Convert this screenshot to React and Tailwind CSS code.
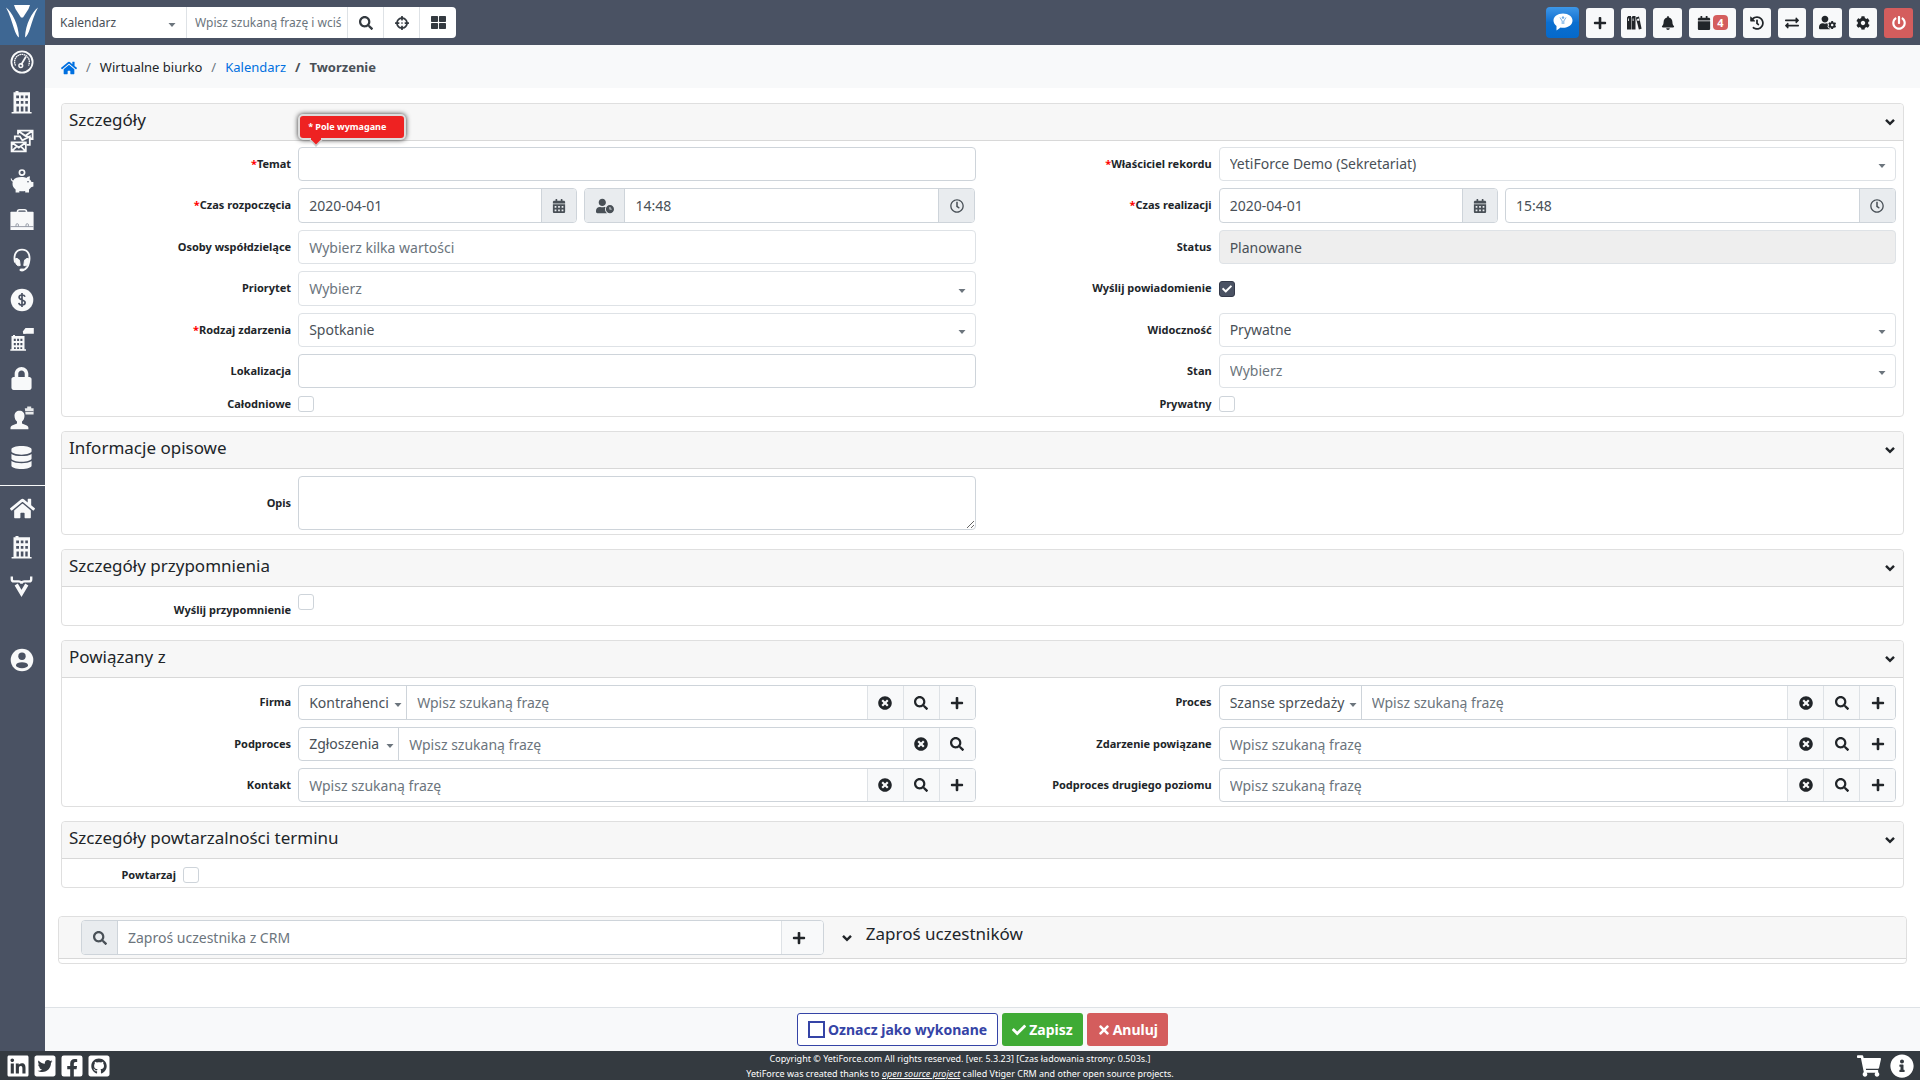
import {
  FaBell,
  FaCalendar,
  FaCalendarAlt,
  FaCheck,
  FaCog,
  FaCrosshairs,
  FaDatabase,
  FaExchangeAlt,
  FaFacebookSquare,
  FaGithubSquare,
  FaHistory,
  FaHome,
  FaInfoCircle,
  FaLinkedin,
  FaLock,
  FaPlus,
  FaPowerOff,
  FaRegClock,
  FaSearch,
  FaShoppingCart,
  FaThLarge,
  FaTimes,
  FaTimesCircle,
  FaTwitterSquare,
  FaUserClock,
  FaUserCog,
} from 'react-icons/fa';

/* ---------- custom icons ---------- */

function GaugeIcon() {
  return (
    <svg viewBox="0 0 24 24" className="size-6" fill="none" stroke="currentColor">
      <circle cx="12" cy="12" r="10.6" strokeWidth="1.8" />
      <path d="M5.6 15.5a7.4 7.4 0 1 1 12.8 0" strokeWidth="1.3" strokeDasharray="1.6 0.5" />
      <path d="M16 6.5 11 15" strokeWidth="1.7" />
      <circle cx="10.8" cy="15.6" r="1.9" strokeWidth="1.4" />
    </svg>
  );
}

function BuildingIcon() {
  return (
    <svg viewBox="0 0 24 24" className="size-6" fill="currentColor">
      <path
        fillRule="evenodd"
        d="M3.500 2.200h2V1h3v1.200h11.500V22h1.600v1.500H1.600V22h1.900ZM6.200 5.400v2.800h2.800V5.400Zm4.600 0v2.800h2.600V5.400Zm4.500 0v2.800h2.600V5.400ZM6.200 11v2.800h2.800V11Zm4.600 0v2.800h2.600V11Zm4.500 0v2.800h2.600V11ZM6.500 16.600V21.500h2.400v-4.900Zm4.300 0v4.900h2.600v-4.900Zm4.500 0v4.900h2.400v-4.900Z"
      />
    </svg>
  );
}

function MailsIcon() {
  return (
    <svg viewBox="0 0 24 24" className="size-6" fill="none" stroke="currentColor" strokeWidth="1.8">
      <path d="M8 5.4V1.6h14.6v8.6h-3M8 1.8l7.3 5 7.2-5M15.8 6.4l6.6 3.8" />
      <path d="M4.8 10.8V7.4h5l2.6 4 7.4-4v8.4h-3.2" />
      <path d="M1.6 13.4h14.2v9H1.6ZM1.8 13.6l7 5 7-5M1.8 22.2l5.2-5M15.6 22.2l-5-5" />
    </svg>
  );
}

function PiggyIcon() {
  return (
    <svg viewBox="0 0 24 24" className="size-6" fill="currentColor">
      <circle cx="12" cy="3.6" r="2.6" fill="none" stroke="currentColor" strokeWidth="1.7" />
      <path d="M1.4 9.2c.6 1.5 1 2.200 1.800 2.200C4.600 9 7.800 8 11.600 8c2 0 3.400.2 4.800.9.900-.900 2-1.500 3.600-1.600l-.4 3c1 .8 1.500 1.700 1.900 2.600h1.900v4.700l-2.300.7c-.6 1-1.300 1.700-2.100 2.300v2.800h-3.800v-1.500c-2 .3-4 .3-5.800 0v1.500H5.600v-3C3.700 18.900 2.500 17.200 2.500 14.800c0-.9.100-1.500.3-2.100C1.500 12.300.8 10.900.7 9.500Z" />
      <circle cx="18" cy="12.800" r=".8" fill="#4a5263" />
    </svg>
  );
}

function CaseIcon() {
  return (
    <svg viewBox="0 0 24 24" className="size-6" fill="currentColor">
      <path d="M7.500 4.500V3.600C7.500 2.400 8.500 1.800 9.500 1.800h5c1 0 2 .6 2 1.800v.9" fill="none" stroke="currentColor" strokeWidth="1.6" />
      <path d="M1.200 3.800h21.600q.8 0 .8.800v17.400H.4V4.600q0-.8.800-.8Z" />
      <path d="M.4 18.600h23.200M6 18.500v-2.200q1.200-1.200 2.400 0v2.200M16 18.500v-2.200q1.200-1.200 2.400 0v2.200" fill="none" stroke="#8d93a0" strokeWidth=".9" />
    </svg>
  );
}

function HeadsetIcon() {
  return (
    <svg viewBox="0 0 24 24" className="size-6" fill="none" stroke="currentColor" strokeWidth="1.800">
      <path d="M5 14.500C3.200 7 6 1.600 12 1.600S20.800 7 19 14.500c-.8 4-2 6.500-6 7.500" />
      <path d="M5.600 10.500c2.200-.3 3.500.8 4 2.500l.6 4.500c-2.200.8-4-.2-4.600-3Z" fill="currentColor" strokeWidth="1" />
      <path d="M18.400 10.500c-2.200-.3-3.500.8-4 2.500l-.6 4.500c2.200.8 4-.2 4.600-3Z" fill="currentColor" strokeWidth="1" />
      <ellipse cx="12" cy="22" rx="2.600" ry="1.400" fill="currentColor" stroke="none" />
    </svg>
  );
}

function DollarIcon() {
  return (
    <svg viewBox="0 0 24 24" className="size-6" fill="none">
      <circle cx="12" cy="12" r="11.300" fill="currentColor" />
      <path
        d="M15 8.800C14.600 7.500 13.500 7 12 7c-1.700 0-2.900.8-2.900 2.300 0 3.400 6 1.900 6 5.300 0 1.500-1.300 2.400-3.100 2.400-1.700 0-2.900-.7-3.200-2.200M12 5v14"
        stroke="#4a5263"
        strokeWidth="1.700"
      />
    </svg>
  );
}

function OfficeTagIcon() {
  return (
    <svg viewBox="0 0 24 24" className="size-6" fill="currentColor">
      <path
        fillRule="evenodd"
        d="M1.500 9H3V8h2v1h9.500v13.200H16v1.500H.3v-1.500h1.200Zm2.300 2.700V14h2v-2.300Zm3.300 0V14h2v-2.300Zm3.300 0V14h2v-2.300ZM3.800 16v2.200h2V16Zm3.300 0v2.200h2V16Zm3.300 0v2.200h2V16ZM4 20.200v1.800h1.800v-1.800Zm3.100 0v1.800h2v-1.800Zm3.300 0v1.800h1.800v-1.800Z"
      />
      <path d="m12.800 4.500 2.700-3.500h8.300v5.800h-7l-3.500.3Z" />
    </svg>
  );
}

function AgentIcon() {
  return (
    <svg viewBox="0 0 24 24" className="size-6" fill="currentColor">
      <path d="M9.500 4.800c3 0 5 2 5 5 0 2.600-1 4.600-2.500 5.800v1.800l4.800 2c1 .5 1.600 1.400 1.600 2.400v1.400H.5v-1.400c0-1 .6-1.900 1.600-2.400l4.900-2v-1.800c-1.500-1.200-2.500-3.200-2.500-5.800 0-3 2-5 5-5Z" />
      <path d="M14.800 2.200h2.400V.6h4v1.600h2.400v6.400h-8Z" opacity=".9" />
      <path d="M15 5.500h8.600" stroke="#4a5263" strokeWidth=".7" />
    </svg>
  );
}

function YetiIcon() {
  return (
    <svg viewBox="0 0 24 24" className="size-6" fill="none" stroke="currentColor">
      <path d="M1.800 2.500v2.700q0 2.200 2 2.200h4.600q2.600 0 3.100 2 .5-2 3.100-2h4.600q2 0 2-2.200V2.500" strokeWidth="2.400" />
      <path d="m6.200 10.500 5.300 9 5.300-9" strokeWidth="3.600" />
    </svg>
  );
}

function ProfileIcon() {
  return (
    <svg viewBox="0 0 24 24" className="size-6">
      <circle cx="12" cy="12" r="11.300" fill="currentColor" />
      <circle cx="12" cy="8.200" r="3.700" fill="#4a5263" />
      <ellipse cx="12" cy="17.200" rx="6" ry="3" fill="#4a5263" />
    </svg>
  );
}

function BooksIcon() {
  return (
    <svg viewBox="0 0 16 16" className="size-4" fill="currentColor">
      <path
        fillRule="evenodd"
        d="M1 2.500 2.200 1H5v13.500H1Zm1.200 1V6h.8V3.500ZM5.500 2.500 6.700 1h2.800v13.500h-4Zm1.200 1V6h.8V3.500Z"
      />
      <path d="m9.800 2.500 3.200-1 2.600 12.300-2.700.8Z" />
      <path d="m11 4 2-.5.500 2-2 .6Z" fill="#f8f9fa" />
    </svg>
  );
}

function LogoIcon() {
  return (
    <svg viewBox="0 0 45 45" className="size-[45px]" fill="#fff">
      <path d="M14 5h16l-1.500 4-5.500 8.500h-2L15.500 9Z" />
      <path d="M6 7.500C12 12 18.500 24 19 37.500c-2-1-3.500-4.500-5-9C12 22 9.500 14 6 7.500Z" />
      <path d="M38 7.500C32 12 25.500 24 25 37.500c2-1 3.500-4.500 5-9 2-6.500 4.500-14.500 8-21Z" />
    </svg>
  );
}

function ChatIcon() {
  return (
    <svg viewBox="0 0 20 18" className="w-5 h-[18px]">
      <path d="M10 .5c5.400 0 9.500 3 9.500 7 0 4.200-4.100 7.300-9.500 7.300-.9 0-1.600 0-2.400-.2L3.500 17.500V13C1.500 11.600.5 9.600.5 7.500c0-4 4.100-7 9.500-7Z" fill="#fff" />
      <path d="m7 4.500 2.200 3.500v3M13 4.500l-2.200 3.500v3M9 4h2l-1 1.800Z" fill="none" stroke="#1877d2" strokeWidth=".6" />
    </svg>
  );
}

function ChevronIcon() {
  return (
    <svg viewBox="0 0 10 8" className="w-[10px] h-2" fill="none" stroke="#212529" strokeWidth="2.400">
      <path d="m1 1.800 4 4 4-4" />
    </svg>
  );
}

/* ---------- form parts ---------- */

const control = 'w-full h-full min-w-0 px-2.5 text-sm text-[#495057] placeholder:text-[#6c757d] outline-none';
const boxed = 'bg-white border border-[#ced4da] rounded-sm';

function Caret({ className = 'right-2.5' }) {
  return (
    <svg viewBox="0 0 8 4" className={`absolute top-1/2 w-2 h-1 pointer-events-none ${className}`} fill="#6c757d">
      <path d="M.5 0h7L4 4Z" />
    </svg>
  );
}

function Field({ id, label, required, children, className = 'h-[34px] items-center' }) {
  return (
    <div className={`flex ${className}`}>
      <label htmlFor={id} className="w-1/4 shrink-0 self-center pr-px text-right text-[11px] font-bold text-[#212529]">
        {required && <span className="text-[#ff0000]">*</span>}
        {label}
      </label>
      <div className="flex-1 min-w-0 h-full pl-1.5 pr-[7px] flex items-[inherit]">{children}</div>
    </div>
  );
}

function TextField({ id, ...props }) {
  return <input id={id} type="text" className={`${control} ${boxed}`} {...props} />;
}

function SelectField({ id, value, muted }) {
  return (
    <div className="relative w-full h-full">
      <select
        id={id}
        className={`w-full h-full px-2.5 appearance-none text-sm bg-white border border-[#dee2e6] rounded-sm outline-none ${muted ? 'text-[#6c757d]' : 'text-[#495057]'}`}
      >
        <option>{value}</option>
      </select>
      <Caret />
    </div>
  );
}

function Checkbox({ id, checked }) {
  return (
    <span className="relative size-4 shrink-0 self-center flex">
      <input
        id={id}
        type="checkbox"
        defaultChecked={checked}
        className="peer size-4 appearance-none bg-white border border-[#ced4da] rounded-[3px] checked:bg-[#4a5263] checked:border-[#343a4a]"
      />
      <FaCheck className="absolute left-[3px] top-[3px] size-[10px] text-white pointer-events-none hidden peer-checked:block" />
    </span>
  );
}

function Addon({ label, children, className = 'w-[38px]' }) {
  return (
    <button
      type="button"
      aria-label={label}
      className={`h-full shrink-0 flex items-center justify-center bg-[#e9ecef] text-[#495057] text-sm border-[#ced4da] ${className}`}
    >
      {children}
    </button>
  );
}

function DateTimeField({ id, date, time, withUser }) {
  return (
    <div className="w-full h-full grid grid-cols-[5fr_7fr] gap-[7px]">
      <div className={`flex overflow-hidden ${boxed}`}>
        <input id={id} type="text" defaultValue={date} className={control} />
        <Addon label="Wybierz datę" className="w-[35px] border-l"><FaCalendarAlt /></Addon>
      </div>
      <div className={`flex overflow-hidden ${boxed}`}>
        {withUser && (
          <Addon label="Dostępność" className="w-10 border-r"><FaUserClock className="size-[18px]" /></Addon>
        )}
        <input type="text" aria-label="Godzina" defaultValue={time} className={control} />
        <Addon label="Wybierz godzinę" className="w-9 border-l"><FaRegClock /></Addon>
      </div>
    </div>
  );
}

function ReferenceField({ id, module, moduleWidth, noAdd }) {
  const btn = 'w-9 h-full shrink-0 flex items-center justify-center bg-[#f8f9fa] text-[#212529] text-sm border-l border-[#dee2e6]';
  return (
    <div className={`w-full h-full flex overflow-hidden ${boxed}`}>
      {module && (
        <div className={`relative shrink-0 border-r border-[#ced4da] ${moduleWidth}`}>
          <select aria-label="Moduł" className="w-full h-full px-2.5 appearance-none text-sm text-[#495057] outline-none">
            <option>{module}</option>
          </select>
          <Caret className="right-1" />
        </div>
      )}
      <input id={id} type="text" placeholder="Wpisz szukaną frazę" className={control} />
      <button type="button" aria-label="Wyczyść" className={btn}><FaTimesCircle /></button>
      <button type="button" aria-label="Szukaj" className={btn}><FaSearch /></button>
      {!noAdd && <button type="button" aria-label="Dodaj" className={btn}><FaPlus /></button>}
    </div>
  );
}

function Panel({ title, children, className = '' }) {
  return (
    <section className="mb-[14px] bg-white border border-[#dfdfdf] rounded">
      <header className="h-[37px] pl-[7px] pr-2 flex items-center justify-between bg-[#f7f7f7] border-b border-[#d8d8d8] rounded-t">
        <h2 className="text-[17px] leading-6 pb-1 text-[#212529]">{title}</h2>
        <button type="button" aria-label={`Zwiń: ${title}`}><ChevronIcon /></button>
      </header>
      <div className={className}>{children}</div>
    </section>
  );
}

/* ---------- layout ---------- */

const menuTop = [
  ['Pulpit', <GaugeIcon />],
  ['Firmy', <BuildingIcon />],
  ['Poczta', <MailsIcon />],
  ['Finanse', <PiggyIcon />],
  ['Sprzedaż', <CaseIcon />],
  ['Wsparcie', <HeadsetIcon />],
  ['Księgowość', <DollarIcon />],
  ['Oddziały', <OfficeTagIcon />],
  ['Bezpieczeństwo', <FaLock className="size-[23px]" />],
  ['Kadry', <AgentIcon />],
  ['Bazy danych', <FaDatabase className="size-[23px]" />],
];

const menuBottom = [
  ['Strona główna', <FaHome className="size-[25px]" />],
  ['Organizacja', <BuildingIcon />],
  ['YetiForce', <YetiIcon />],
];

const actions = [
  ['Dodaj', <FaPlus />, 'w-7'],
  ['Archiwum', <BooksIcon />, 'w-[25px]'],
  ['Powiadomienia', <FaBell />, 'w-[29px]'],
  ['Przypomnienia', <><FaCalendar /><span className="ml-0.5 w-[15px] h-[15px] rounded-sm bg-[#d45d5d] text-white text-[11px] leading-[15px] font-bold">4</span></>, 'w-[47px]'],
  ['Historia', <FaHistory />, 'w-7'],
  ['Przełącz', <FaExchangeAlt />, 'w-7'],
  ['Użytkownik', <FaUserCog className="size-[17px]" />, 'w-[29px]'],
  ['Ustawienia', <FaCog />, 'w-7'],
];

function TopBar() {
  const btn = 'h-full flex items-center justify-center text-sm text-[#343a40] border-l border-[#dee2e6]';
  return (
    <header className="h-[45px] flex items-center justify-between bg-[#4a5263] pr-[7px]">
      <div className="flex items-center">
        <a href="#" aria-label="YetiForce" className="mr-[7px] bg-[#3e6793]"><LogoIcon /></a>
        <div className="h-[31px] flex bg-white rounded-sm overflow-hidden">
          <div className="relative w-[135px] border-r border-[#dee2e6]">
            <select aria-label="Moduł wyszukiwania" className="w-full h-full pl-2 appearance-none text-xs text-[#495057] outline-none">
              <option>Kalendarz</option>
            </select>
            <Caret />
          </div>
          <input
            type="text"
            aria-label="Szukaj"
            placeholder="Wpisz szukaną frazę i wciś"
            className="w-[160px] pl-2 text-xs placeholder:text-[#6c757d] outline-none"
          />
          <button type="button" aria-label="Szukaj" className={`w-9 ${btn}`}><FaSearch /></button>
          <button type="button" aria-label="Szukaj globalnie" className={`w-9 ${btn}`}><FaCrosshairs /></button>
          <button type="button" aria-label="Wyszukiwanie zaawansowane" className={`w-[37px] ${btn}`}><FaThLarge className="size-[15px]" /></button>
        </div>
      </div>
      <div className="flex items-center gap-[7px]">
        <button type="button" aria-label="Czat" className="w-[33px] h-[31px] pb-0.5 flex items-center justify-center rounded-sm bg-linear-to-b from-[#3d97e8] from-0% via-[#0b6fd0] via-50% to-[#0569cb]">
          <ChatIcon />
        </button>
        {actions.map(([label, icon, width]) => (
          <button key={label} type="button" aria-label={label} className={`h-[30px] flex items-center justify-center rounded-[3px] bg-[#f8f9fa] text-sm text-[#212529] ${width}`}>
            {icon}
          </button>
        ))}
        <button type="button" aria-label="Wyloguj" className="w-[29px] h-[30px] flex items-center justify-center rounded-[3px] bg-[#d45d5d] text-white text-sm">
          <FaPowerOff />
        </button>
      </div>
    </header>
  );
}

function MenuLink({ label, icon }) {
  return (
    <a href="#" aria-label={label} className="h-[34px] pl-[10px] flex items-center text-[#f8f9fa]">
      {icon}
    </a>
  );
}

function Sidebar() {
  return (
    <nav className="w-[45px] shrink-0 bg-[#4a5263]">
      <div className="h-[430px] flex flex-col justify-between">
        {menuTop.map(([label, icon]) => <MenuLink key={label} label={label} icon={icon} />)}
      </div>
      <div className="mt-[10px] pt-[5px] border-t border-[#f8f9fa] flex flex-col gap-[5px]">
        {menuBottom.map(([label, icon]) => <MenuLink key={label} label={label} icon={icon} />)}
      </div>
      <div className="mt-10">
        <MenuLink label="Konto" icon={<ProfileIcon />} />
      </div>
    </nav>
  );
}

function Breadcrumbs() {
  return (
    <nav className="h-[43px] pl-4 pt-[3px] flex items-center gap-[9px] bg-[#f8f9fa] text-[13px] text-[#212529]">
      <a href="#" aria-label="Strona główna" className="text-[#0070e0]"><FaHome className="size-4" /></a>
      <span className="text-[#6c757d]">/</span>
      <span>Wirtualne biurko</span>
      <span className="text-[#6c757d]">/</span>
      <a href="#" className="text-[#0070e0]">Kalendarz</a>
      <span className="font-bold text-[#495057]">/</span>
      <span className="font-bold text-[#495057]">Tworzenie</span>
    </nav>
  );
}

function RequiredHint() {
  return (
    <div className="absolute left-0 bottom-[41px] w-[108px] h-[26px] px-2 bg-[#ee2222] border-2 border-[#dddddd] rounded-[5px] shadow-[0_0_5px_#333] text-[9px] leading-[22px] font-bold text-white">
      * Pole wymagane
      <svg viewBox="0 0 14 9" className="absolute left-[9px] top-[22px] w-[14px] h-[9px]">
        <path d="M0 1.500h14L7 9Z" fill="#ccc" />
        <path d="M2 0h10v1.500L7 6.500 2 1.500Z" fill="#ee2222" />
      </svg>
    </div>
  );
}

function EventForm() {
  return (
    <form className="px-4 pt-[15px]">
      <Panel title="Szczegóły" className="grid grid-cols-2 gap-y-[7px] pt-[6px] pb-[3px]">
        <Field id="subject" label="Temat" required>
          <div className="relative w-full h-full">
            <TextField id="subject" />
            <RequiredHint />
          </div>
        </Field>
        <Field id="owner" label="Właściciel rekordu" required>
          <SelectField id="owner" value="YetiForce Demo (Sekretariat)" />
        </Field>
        <Field id="start" label="Czas rozpoczęcia" required className="h-[35px]">
          <DateTimeField id="start" date="2020-04-01" time="14:48" withUser />
        </Field>
        <Field id="end" label="Czas realizacji" required className="h-[35px]">
          <DateTimeField id="end" date="2020-04-01" time="15:48" />
        </Field>
        <Field id="shared" label="Osoby współdzielące">
          <input id="shared" type="text" placeholder="Wybierz kilka wartości" className={`${control} bg-white border border-[#dee2e6] rounded-sm`} />
        </Field>
        <Field id="status" label="Status">
          <input id="status" type="text" readOnly defaultValue="Planowane" className={`${control} bg-[#eeeeee] border border-[#dee2e6] rounded-sm`} />
        </Field>
        <Field id="priority" label="Priorytet" className="h-[35px]"><SelectField id="priority" value="Wybierz" muted /></Field>
        <Field id="notify" label="Wyślij powiadomienie" className="h-[35px]"><Checkbox id="notify" checked /></Field>
        <Field id="type" label="Rodzaj zdarzenia" required><SelectField id="type" value="Spotkanie" /></Field>
        <Field id="visibility" label="Widoczność"><SelectField id="visibility" value="Prywatne" /></Field>
        <Field id="location" label="Lokalizacja"><TextField id="location" /></Field>
        <Field id="state" label="Stan"><SelectField id="state" value="Wybierz" muted /></Field>
        <Field id="allday" label="Całodniowe" className="h-[18px]"><Checkbox id="allday" /></Field>
        <Field id="private" label="Prywatny" className="h-[18px]"><Checkbox id="private" /></Field>
      </Panel>

      <Panel title="Informacje opisowe" className="grid grid-cols-2 pt-[7px] pb-1">
        <Field id="description" label="Opis" className="h-[54px]">
          <textarea id="description" className={`w-full h-full px-2.5 py-1 text-sm text-[#495057] outline-none ${boxed}`} />
        </Field>
      </Panel>

      <Panel title="Szczegóły przypomnienia" className="pt-[7px] pb-[7px]">
        <div className="w-1/2 h-6 flex items-start">
          <label htmlFor="reminder" className="w-1/4 shrink-0 self-end pr-px text-right text-[11px] font-bold text-[#212529]">
            Wyślij przypomnienie
          </label>
          <div className="pl-1.5"><Checkbox id="reminder" /></div>
        </div>
      </Panel>

      <Panel title="Powiązany z" className="grid grid-cols-2 gap-y-[7px] pt-[7px] pb-1">
        <Field id="company" label="Firma" className="h-[35px]"><ReferenceField id="company" module="Kontrahenci" moduleWidth="w-[108px]" /></Field>
        <Field id="process" label="Proces" className="h-[35px]"><ReferenceField id="process" module="Szanse sprzedaży" moduleWidth="w-[142px]" /></Field>
        <Field id="subprocess" label="Podproces"><ReferenceField id="subprocess" module="Zgłoszenia" moduleWidth="w-[100px]" noAdd /></Field>
        <Field id="related" label="Zdarzenie powiązane"><ReferenceField id="related" /></Field>
        <Field id="contact" label="Kontakt"><ReferenceField id="contact" /></Field>
        <Field id="subprocess2" label="Podproces drugiego poziomu"><ReferenceField id="subprocess2" /></Field>
      </Panel>

      <Panel title="Szczegóły powtarzalności terminu" className="h-7 pt-1 flex items-center gap-[7px]">
        <label htmlFor="repeat" className="w-[114px] text-right text-[11px] font-bold text-[#212529]">Powtarzaj</label>
        <Checkbox id="repeat" />
      </Panel>

      <section className="-mx-[3px] mt-7 pb-1 bg-white border border-[#dfdfdf] rounded">
        <header className="h-[42px] pl-[22px] flex items-center bg-[#f7f7f7] border-b border-[#d8d8d8] rounded-t">
          <div className={`w-[40.7%] h-[35px] flex overflow-hidden ${boxed}`}>
            <label htmlFor="invite" className="w-9 shrink-0 flex items-center justify-center bg-[#e9ecef] text-[#495057] text-sm border-r border-[#ced4da]">
              <FaSearch />
            </label>
            <input id="invite" type="text" placeholder="Zaproś uczestnika z CRM" className={control} />
            <button type="button" aria-label="Dodaj" className="w-[42px] pr-[6px] shrink-0 flex items-center justify-center bg-[#f8f9fa] text-[#212529] text-sm border-l border-[#dee2e6]">
              <FaPlus />
            </button>
          </div>
          <button type="button" aria-label="Zwiń: Zaproś uczestników" className="ml-[18px]"><ChevronIcon /></button>
          <h2 className="ml-[14px] pb-[7px] text-[17px] leading-6 text-[#212529]">Zaproś uczestników</h2>
        </header>
      </section>
    </form>
  );
}

function FormActions() {
  const btn = 'h-[33px] px-[10px] flex items-center rounded-[3px] text-sm font-bold';
  return (
    <div className="h-11 flex items-center justify-center gap-1 bg-[#f8f9fa] border-t border-[#dee2e6]">
      <button type="button" className={`${btn} gap-[3px] bg-white border border-[#3544a6] text-[#3544a6]`}>
        <span className="size-[17px] border-2 border-[#3544a6]" />
        Oznacz jako wykonane
      </button>
      <button type="submit" className={`${btn} gap-[3px] bg-[#3fab35] text-white`}><FaCheck />Zapisz</button>
      <button type="button" className={`${btn} gap-[2px] bg-[#d45d5d] text-white`}><FaTimes />Anuluj</button>
    </div>
  );
}

function Footer() {
  return (
    <footer className="h-[29px] px-[6px] flex items-center justify-between bg-[#343a40] text-white">
      <div className="w-[110px] flex gap-[3px] text-2xl">
        <a href="#" aria-label="LinkedIn"><FaLinkedin /></a>
        <a href="#" aria-label="Twitter"><FaTwitterSquare /></a>
        <a href="#" aria-label="Facebook"><FaFacebookSquare /></a>
        <a href="#" aria-label="GitHub"><FaGithubSquare /></a>
      </div>
      <div className="text-center text-[9px] leading-[15px]">
        <p>Copyright © YetiForce.com All rights reserved. [ver. 5.3.23] [Czas ładowania strony: 0.503s.]</p>
        <p>
          YetiForce was created thanks to <a href="#" className="italic underline">open source project</a> called Vtiger CRM and other open source projects.
        </p>
      </div>
      <div className="w-[110px] flex justify-end gap-[9px] text-2xl">
        <a href="#" aria-label="Sklep"><FaShoppingCart /></a>
        <a href="#" aria-label="Informacje"><FaInfoCircle /></a>
      </div>
    </footer>
  );
}

export default function App() {
  return (
    <div className="min-h-screen flex flex-col bg-white font-['Noto_Sans','Open_Sans',sans-serif]">
      <TopBar />
      <div className="flex-1 flex">
        <Sidebar />
        <main className="flex-1 min-w-0 flex flex-col">
          <Breadcrumbs />
          <div className="flex-1">
            <EventForm />
          </div>
          <FormActions />
        </main>
      </div>
      <Footer />
    </div>
  );
}
